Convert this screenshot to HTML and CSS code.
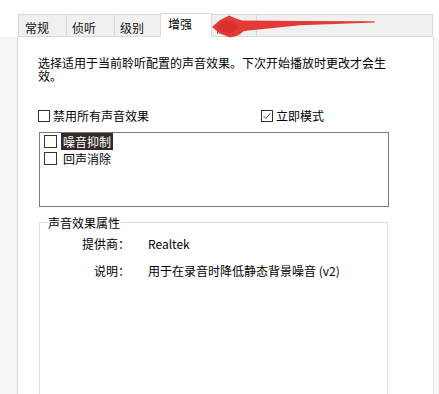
FILE: index.html
```html
<!DOCTYPE html>
<html lang="zh-CN">
<head>
<meta charset="utf-8">
<title>增强</title>
<link rel="stylesheet" href="styles.css">
</head>
<body>
<div class="window">
  <div class="tabstrip">
    <div class="tab t1">常规</div>
    <div class="tab t2">侦听</div>
    <div class="tab t3">级别</div>
    <div class="tab selected">增强</div>
    <div class="tab t5">高级</div>
  </div>
  <div class="body">
    <div class="gutter-left"></div>
    <div class="panel">
      <p class="desc">选择适用于当前聆听配置的声音效果。下次开始播放时更改才会生效。</p>
      <div class="options">
        <label class="opt opt1"><span class="cb"></span>禁用所有声音效果</label>
        <label class="opt"><span class="cb checked"><svg viewBox="0 0 12 12" width="10" height="10"><path d="M2 6.2 L4.6 8.8 L10 2.8" fill="none" stroke="#333" stroke-width="1.1"/></svg></span>立即模式</label>
      </div>
      <div class="listbox">
        <div class="item"><span class="cb big"></span><span class="item-text hl">噪音抑制</span></div>
        <div class="item"><span class="cb big"></span><span class="item-text">回声消除</span></div>
      </div>
      <fieldset class="group">
        <legend>声音效果属性</legend>
        <div class="props">
          <div class="k">提供商：</div><div class="v">Realtek</div>
          <div class="k">说明：</div><div class="v">用于在录音时降低静态背景噪音 (v2)</div>
        </div>
      </fieldset>
    </div>
    <div class="gutter-right"></div>
  </div>
  <svg class="arrow" width="439" height="50" viewBox="0 0 439 50">
    <polygon points="212,27 220,20 229,15.5 236,18.5 242,20.5 300,21 374,21.2 375,22.4 300,25.2 244,31 238,35.5 230,37.5 220,33.5" fill="#e43a36"/>
    <polygon points="216,27 225,20.5 233,21 238,27 232,33 223,32" fill="#cf2b29" opacity="0.6"/>
  </svg>
</div>
</body>
</html>
```
FILE: styles.css
```css
body {
  margin: 0;
  width: 439px;
  height: 394px;
  overflow: hidden;
  background: #fff;
  font-family: "Noto Sans CJK SC", "Noto Sans", sans-serif;
  font-size: 12px;
  line-height: 13px;
  color: #000;
}

.window {
  position: relative;
  height: 394px;
  overflow: hidden;
  display: flex;
  flex-direction: column;
}

.tabstrip {
  display: flex;
  margin: 14px 0 0 18px;
  width: 415px;
  height: 23px;
  box-sizing: border-box;
  background: #f0f0f0;
  border: 1px solid #d9d9d9;
  flex: none;
}

.tab {
  box-sizing: border-box;
  height: 21px;
  border-right: 1px solid #d9d9d9;
  padding-top: 6px;
  color: #111;
}

.t1 { width: 48px; padding-left: 6px; }
.t2 { width: 48px; padding-left: 5px; }
.t3 { width: 47px; padding-left: 5px; }
.t5 { width: 47px; padding-left: 6px; color: #444; }

.selected {
  width: 52px;
  height: 24px;
  margin: -2px -2px -1px;
  padding-left: 7px;
  padding-top: 3px;
  background: #fff;
  border: 1px solid #d9d9d9;
  border-bottom: none;
  position: relative;
  z-index: 1;
  color: #000;
}

.body {
  flex: 1;
  display: flex;
  min-height: 0;
}

.gutter-left {
  width: 17px;
  background: #f4f5f7;
  border-right: 1px solid #d8d8d8;
}

.panel {
  width: 415px;
  box-sizing: border-box;
  padding: 19px 0 0 20px;
  background: #fff;
}

.gutter-right {
  flex: 1;
  background: #f6f7f9;
  border-left: 1px solid #e4e4e4;
}

.desc {
  margin: 0;
  width: 352px;
}

.options {
  display: flex;
  margin-top: 27px;
}

.opt {
  display: flex;
  align-items: center;
}

.opt1 {
  width: 223px;
}

.cb {
  width: 12px;
  height: 12px;
  box-sizing: border-box;
  border: 1px solid #333;
  margin-right: 3px;
  background: #fff;
  display: flex;
  align-items: center;
  justify-content: center;
  flex: none;
}

.cb.big {
  width: 13px;
  height: 13px;
  margin-right: 4px;
}

.listbox {
  margin: 10px 0 0 1px;
  width: 350px;
  height: 75px;
  box-sizing: border-box;
  border: 1px solid #7c7c7c;
  padding: 0 0 0 4px;
}

.item {
  display: flex;
  align-items: center;
  height: 17px;
}

.item-text {
  padding: 2px 2px;
  line-height: 13px;
}

.hl {
  background: #332a2a;
  color: #fff;
}

.group {
  margin: 9px 0 0 1px;
  width: 349px;
  height: 178px;
  box-sizing: border-box;
  border: 1px solid #dcdcdc;
  border-bottom: none;
  padding: 8px 7px 0;
  min-inline-size: 0;
}

.group legend {
  padding: 0 1px;
}

.props {
  display: grid;
  grid-template-columns: 83px auto;
  column-gap: 18px;
  row-gap: 14px;
}

.k {
  text-align: right;
}

.arrow {
  position: absolute;
  left: 0;
  top: 0;
  z-index: 2;
  pointer-events: none;
}
```
